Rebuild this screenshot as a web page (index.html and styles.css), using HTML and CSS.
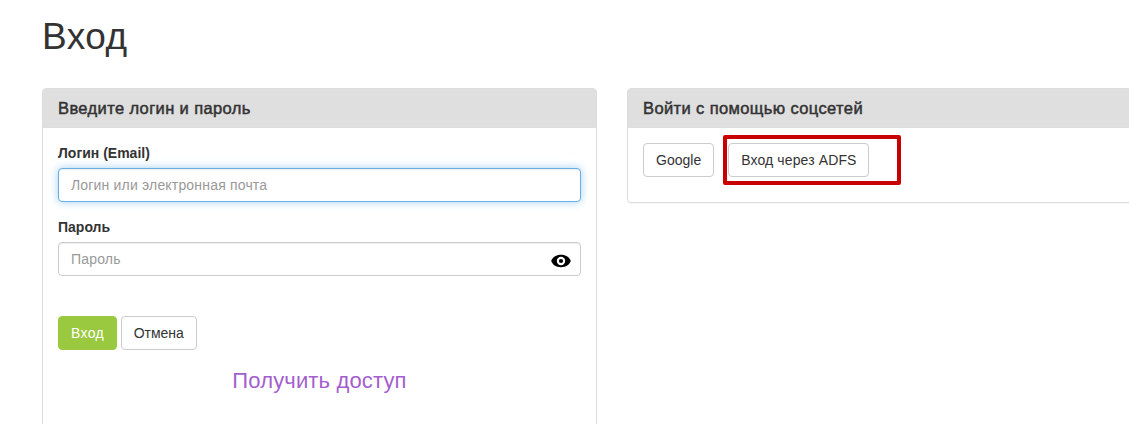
FILE: index.html
```
<!DOCTYPE html>
<html lang="ru">
<head>
    <meta charset="UTF-8">
    <meta name="viewport" content="width=device-width, initial-scale=1.0">
    <title>Вход</title>
    <link rel="stylesheet" href="styles.css">
</head>
<body>
    <div class="container">
        <h1>Вход</h1>
        <div class="row">
            <div class="panel panel-login">
                <div class="panel-heading">
                    <h3 class="panel-title title-login">Введите логин и пароль</h3>
                </div>
                <form class="panel-body">
                    <div class="form-group">
                        <label for="login">Логин (Email)</label>
                        <input type="text" id="login" class="form-control active" placeholder="Логин или электронная почта">
                    </div>
                    <div class="form-group">
                        <label for="password">Пароль</label>
                        <div class="password-wrap">
                            <input type="password" id="password" class="form-control" placeholder="Пароль">
                            <svg class="eye" width="20" height="14" viewBox="0 0 20 14">
                                <path fill="#000" fill-rule="evenodd" d="M10 .8C5 .8 1.600 3.200.2 7c1.400 3.800 4.800 6.200 9.800 6.200s8.400-2.400 9.800-6.200C18.400 3.200 15 .8 10 .8zm0 10.400a4.200 4.200 0 1 1 0-8.400 4.200 4.200 0 0 1 0 8.400z"/>
                                <circle cx="10" cy="7" r="2.100"/>
                            </svg>
                        </div>
                    </div>
                    <div class="buttons">
                        <button type="submit" class="btn btn-primary">Вход</button>
                        <button type="button" class="btn btn-cancel">Отмена</button>
                    </div>
                    <a class="access-link">Получить доступ</a>
                </form>
            </div>
            <div class="panel panel-social">
                <div class="panel-heading">
                    <h3 class="panel-title title-social">Войти с помощью соцсетей</h3>
                </div>
                <div class="panel-body social-list">
                    <button type="button" class="btn btn-google">Google</button>
                    <div class="adfs">
                        <button type="button" class="btn btn-adfs">Вход через ADFS</button>
                        <span class="highlight"></span>
                    </div>
                </div>
            </div>
        </div>
    </div>
</body>
</html>
```
FILE: styles.css
```
* {
    box-sizing: border-box;
}
body {
    margin: 0;
    height: 424px;
    overflow: hidden;
    font-family: "Liberation Sans", Arial, sans-serif;
    font-size: 14px;
    line-height: 20px;
    color: #333;
    background-color: #fff;
}
.container {
    width: 1170px;
    margin-left: 27px;
    padding: 17px 15px 0;
}
h1 {
    margin: 0 0 31px;
    font-size: 37px;
    font-weight: 400;
    line-height: 40px;
    letter-spacing: 0.5px;
}
.row {
    display: grid;
    grid-template-columns: 555px 555px;
    align-items: start;
    gap: 30px;
}
.panel {
    border: 1px solid #ddd;
    border-radius: 4px;
    box-shadow: 0 1px 1px rgba(0, 0, 0, 0.05);
}
.panel-login {
    height: 400px;
}
.panel-heading {
    height: 39px;
    padding: 10px 15px;
    background-color: #dfdfdf;
    border-bottom: 1px solid #ddd;
    border-radius: 3px 3px 0 0;
}
.panel-title {
    margin: 0;
    font-size: 16.5px;
    font-weight: 400;
    line-height: 18px;
    -webkit-text-stroke: 0.5px #333;
}
.title-login {
    letter-spacing: 0.38px;
}
.title-social {
    letter-spacing: 0.38px;
}
.panel-body {
    padding: 15px;
}
.form-group {
    margin-bottom: 15px;
}
label {
    display: block;
    margin-bottom: 5px;
    font-weight: 700;
}
.form-control {
    display: block;
    width: 100%;
    height: 34px;
    padding: 6px 12px;
    border: 1px solid #ccc;
    border-radius: 4px;
    outline: none;
    font: inherit;
    letter-spacing: 0.18px;
    color: #555;
    background-color: #fff;
    box-shadow: inset 0 1px 1px rgba(0, 0, 0, 0.075);
}
.form-control::placeholder {
    color: #999;
    opacity: 1;
}
.form-control.active {
    border-color: #66afe9;
    box-shadow: inset 0 1px 1px rgba(0, 0, 0, 0.075), 0 0 8px rgba(102, 175, 233, 0.6);
}
.password-wrap {
    position: relative;
}
/* eye icon over the right end of the input */
.eye {
    position: absolute;
    right: 10px;
    top: 12px;
}
.buttons {
    display: flex;
    gap: 4px;
    margin-top: 40px;
}
.btn {
    height: 34px;
    padding: 0;
    border: 1px solid #ccc;
    border-radius: 4px;
    font: inherit;
    color: #333;
    background-color: #fff;
    cursor: pointer;
}
.btn-primary {
    width: 59px;
    border-color: #9ac940;
    background-color: #9ac940;
    color: #fff;
    letter-spacing: 0.3px;
}
.btn-cancel {
    width: 75.5px;
}
.access-link {
    display: block;
    margin-top: 16px;
    font-size: 22px;
    line-height: 30px;
    letter-spacing: 0.15px;
    text-align: center;
    color: #a45fcd;
    cursor: pointer;
}
.social-list {
    display: flex;
    gap: 14px;
    padding-bottom: 25px;
}
.btn-google {
    width: 71.4px;
}
.adfs {
    position: relative;
}
.btn-adfs {
    width: 141px;
    letter-spacing: 0.12px;
}
/* red frame around the ADFS button */
.highlight {
    position: absolute;
    left: -5.4px;
    top: -8px;
    width: 178px;
    height: 50px;
    border: 4px solid #c90000;
    border-radius: 2px;
    pointer-events: none;
}
```
